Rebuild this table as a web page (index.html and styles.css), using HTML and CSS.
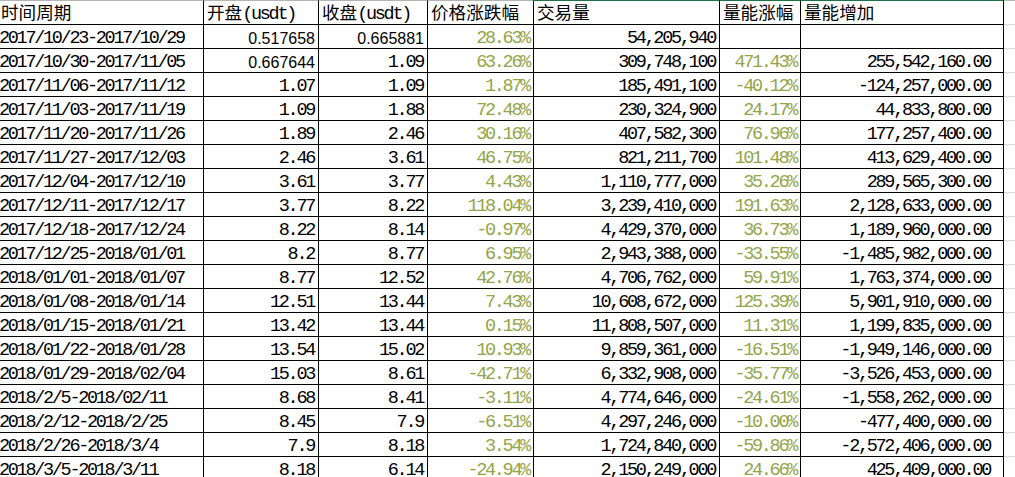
FILE: index.html
```html
<!DOCTYPE html>
<html lang="zh-CN">
<head>
<meta charset="utf-8">
<title>周期数据</title>
<link rel="stylesheet" href="styles.css">
</head>
<body>
<div class="sheet">
  <div class="c h">时间周期</div>
  <div class="c h">开盘<span class="m">(usdt)</span></div>
  <div class="c h">收盘<span class="m">(usdt)</span></div>
  <div class="c h">价格涨跌幅</div>
  <div class="c h g">交易量</div>
  <div class="c h g">量能涨幅</div>
  <div class="c h g">量能增加</div>
  <div class="c h f"></div>

  <div class="c d">2017/10/23-2017/10/29</div><div class="c s">0.517658</div><div class="c s">0.665881</div><div class="c p">28.63%</div><div class="c">54,205,940</div><div class="c p"></div><div class="c w"></div><div class="c f"></div>
  <div class="c d">2017/10/30-2017/11/05</div><div class="c s">0.667644</div><div class="c">1.09</div><div class="c p">63.26%</div><div class="c">309,748,100</div><div class="c p">471.43%</div><div class="c w">255,542,160.00</div><div class="c f"></div>
  <div class="c d">2017/11/06-2017/11/12</div><div class="c">1.07</div><div class="c">1.09</div><div class="c p">1.87%</div><div class="c">185,491,100</div><div class="c p">-40.12%</div><div class="c w">-124,257,000.00</div><div class="c f"></div>
  <div class="c d">2017/11/03-2017/11/19</div><div class="c">1.09</div><div class="c">1.88</div><div class="c p">72.48%</div><div class="c">230,324,900</div><div class="c p">24.17%</div><div class="c w">44,833,800.00</div><div class="c f"></div>
  <div class="c d">2017/11/20-2017/11/26</div><div class="c">1.89</div><div class="c">2.46</div><div class="c p">30.16%</div><div class="c">407,582,300</div><div class="c p">76.96%</div><div class="c w">177,257,400.00</div><div class="c f"></div>
  <div class="c d">2017/11/27-2017/12/03</div><div class="c">2.46</div><div class="c">3.61</div><div class="c p">46.75%</div><div class="c">821,211,700</div><div class="c p">101.48%</div><div class="c w">413,629,400.00</div><div class="c f"></div>
  <div class="c d">2017/12/04-2017/12/10</div><div class="c">3.61</div><div class="c">3.77</div><div class="c p">4.43%</div><div class="c">1,110,777,000</div><div class="c p">35.26%</div><div class="c w">289,565,300.00</div><div class="c f"></div>
  <div class="c d">2017/12/11-2017/12/17</div><div class="c">3.77</div><div class="c">8.22</div><div class="c p">118.04%</div><div class="c">3,239,410,000</div><div class="c p">191.63%</div><div class="c w">2,128,633,000.00</div><div class="c f"></div>
  <div class="c d">2017/12/18-2017/12/24</div><div class="c">8.22</div><div class="c">8.14</div><div class="c p">-0.97%</div><div class="c">4,429,370,000</div><div class="c p">36.73%</div><div class="c w">1,189,960,000.00</div><div class="c f"></div>
  <div class="c d">2017/12/25-2018/01/01</div><div class="c">8.2</div><div class="c">8.77</div><div class="c p">6.95%</div><div class="c">2,943,388,000</div><div class="c p">-33.55%</div><div class="c w">-1,485,982,000.00</div><div class="c f"></div>
  <div class="c d">2018/01/01-2018/01/07</div><div class="c">8.77</div><div class="c">12.52</div><div class="c p">42.76%</div><div class="c">4,706,762,000</div><div class="c p">59.91%</div><div class="c w">1,763,374,000.00</div><div class="c f"></div>
  <div class="c d">2018/01/08-2018/01/14</div><div class="c">12.51</div><div class="c">13.44</div><div class="c p">7.43%</div><div class="c">10,608,672,000</div><div class="c p">125.39%</div><div class="c w">5,901,910,000.00</div><div class="c f"></div>
  <div class="c d">2018/01/15-2018/01/21</div><div class="c">13.42</div><div class="c">13.44</div><div class="c p">0.15%</div><div class="c">11,808,507,000</div><div class="c p">11.31%</div><div class="c w">1,199,835,000.00</div><div class="c f"></div>
  <div class="c d">2018/01/22-2018/01/28</div><div class="c">13.54</div><div class="c">15.02</div><div class="c p">10.93%</div><div class="c">9,859,361,000</div><div class="c p">-16.51%</div><div class="c w">-1,949,146,000.00</div><div class="c f"></div>
  <div class="c d">2018/01/29-2018/02/04</div><div class="c">15.03</div><div class="c">8.61</div><div class="c p">-42.71%</div><div class="c">6,332,908,000</div><div class="c p">-35.77%</div><div class="c w">-3,526,453,000.00</div><div class="c f"></div>
  <div class="c d">2018/2/5-2018/02/11</div><div class="c">8.68</div><div class="c">8.41</div><div class="c p">-3.11%</div><div class="c">4,774,646,000</div><div class="c p">-24.61%</div><div class="c w">-1,558,262,000.00</div><div class="c f"></div>
  <div class="c d">2018/2/12-2018/2/25</div><div class="c">8.45</div><div class="c">7.9</div><div class="c p">-6.51%</div><div class="c">4,297,246,000</div><div class="c p">-10.00%</div><div class="c w">-477,400,000.00</div><div class="c f"></div>
  <div class="c d">2018/2/26-2018/3/4</div><div class="c">7.9</div><div class="c">8.18</div><div class="c p">3.54%</div><div class="c">1,724,840,000</div><div class="c p">-59.86%</div><div class="c w">-2,572,406,000.00</div><div class="c f"></div>
  <div class="c d">2018/3/5-2018/3/11</div><div class="c">8.18</div><div class="c">6.14</div><div class="c p">-24.94%</div><div class="c">2,150,249,000</div><div class="c p">24.66%</div><div class="c w">425,409,000.00</div><div class="c f"></div>
</div>
</body>
</html>
```

FILE: styles.css
```css
html, body {
  margin: 0;
  padding: 0;
  background: #fff;
  overflow: hidden;
}

.sheet {
  display: grid;
  grid-template-columns: 206px 115px 109px 106px 186px 81px 203px 1fr;
  grid-template-rows: 25px;
  grid-auto-rows: 24px;
  margin-left: -2px;
  width: 1019px;
}

.c {
  box-sizing: border-box;
  border-right: 1px solid #000;
  border-bottom: 1px solid #000;
  font-family: "Liberation Mono", monospace;
  font-size: 18.5px;
  line-height: 18px;
  letter-spacing: -2.3px;
  padding: 5px 4px 0 2px;
  text-align: right;
  white-space: nowrap;
  overflow: hidden;
  color: #000;
}

.h {
  border-top: 1px solid #b4b4b4;
  font-family: "Noto Sans CJK SC", sans-serif;
  font-size: 17.6px;
  letter-spacing: 0;
  padding-top: 2px;
  padding-left: 3px;
  text-align: left;
}

.h .m {
  font-family: "Liberation Mono", monospace;
  font-size: 18.5px;
  letter-spacing: -2.3px;
}

.g {
  border-top-color: #1e7145;
}

.d {
  text-align: left;
  padding-left: 1px;
}

.s {
  font-family: "Liberation Sans", Arial, sans-serif;
  font-size: 16px;
  letter-spacing: 0;
  padding-right: 3px;
}

.p {
  color: #93a54a;
}

.w {
  padding-right: 13px;
}

.f {
  border-right: none;
  border-bottom-color: #d9d9d9;
}
```
